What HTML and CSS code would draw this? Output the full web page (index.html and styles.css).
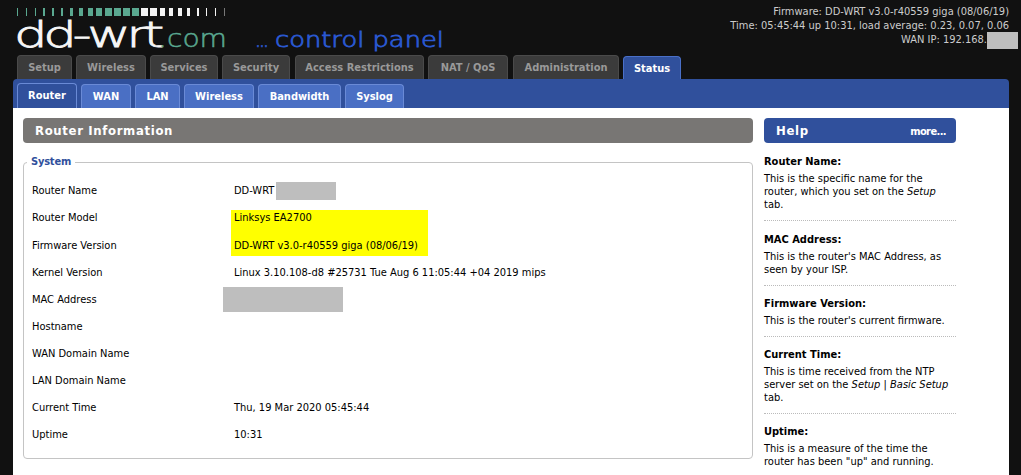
FILE: index.html
```html
<!DOCTYPE html>
<html lang="en">
<head>
<meta charset="utf-8">
<title>DD-WRT Control Panel</title>
<link rel="stylesheet" href="styles.css">
</head>
<body>
<header class="header">
  <div class="brand">
    <svg class="logo" width="450" height="55" viewBox="0 0 450 55" aria-label="dd-wrt.com ... control panel">
      <g fill="#5aa890">
        <rect x="17" y="8" width="1" height="8"/><rect x="26" y="8" width="1" height="8"/><rect x="35" y="8" width="1" height="8"/><rect x="43" y="8" width="2" height="8"/><rect x="52" y="8" width="2" height="8"/><rect x="61" y="8" width="2" height="8"/><rect x="70" y="8" width="3" height="8"/><rect x="79" y="8" width="4" height="8"/><rect x="88" y="8" width="5" height="8"/><rect x="96" y="8" width="6" height="8"/><rect x="105" y="8" width="7" height="8"/><rect x="114" y="8" width="7" height="8"/><rect x="123" y="8" width="7" height="8"/><rect x="132" y="8" width="7" height="8"/>
      </g>
      <g fill="#f4f4f4">
        <rect x="141" y="8" width="7" height="8"/><rect x="150" y="8" width="7" height="8"/><rect x="160" y="8" width="5" height="8"/><rect x="169" y="8" width="4" height="8"/><rect x="178" y="8" width="4" height="8"/><rect x="187" y="8" width="3" height="8"/><rect x="197" y="8" width="2" height="8"/><rect x="206" y="8" width="1" height="8"/><rect x="215" y="8" width="1" height="8"/>
      </g>
      <rect x="224" y="8" width="1" height="8" fill="#777"/>
      <text class="logo-main" x="14" y="47" textLength="146" lengthAdjust="spacingAndGlyphs">dd-wrt</text>
      <text class="logo-com" x="158" y="47" textLength="69" lengthAdjust="spacingAndGlyphs">.com</text>
      <text class="logo-dots" x="256" y="47" textLength="12" lengthAdjust="spacingAndGlyphs">...</text>
      <text class="logo-panel" x="275" y="47" textLength="169" lengthAdjust="spacingAndGlyphs">control panel</text>
    </svg>
  </div>
  <div class="status-info">
    <div>Firmware: DD-WRT v3.0-r40559 giga (08/06/19)</div>
    <div>Time: 05:45:44 up 10:31, load average: 0.23, 0.07, 0.06</div>
    <div class="wan-line">WAN IP: 192.168.<span class="redact redact-ip"></span></div>
  </div>
</header>

<nav class="main-tabs">
  <a class="tab t-setup">Setup</a>
  <a class="tab t-wireless">Wireless</a>
  <a class="tab t-services">Services</a>
  <a class="tab t-security">Security</a>
  <a class="tab t-access">Access Restrictions</a>
  <a class="tab t-nat">NAT / QoS</a>
  <a class="tab t-admin">Administration</a>
  <a class="tab tab-current t-status">Status</a>
</nav>

<div class="panel">
  <nav class="sub-tabs">
    <a class="sub sub-current s-router">Router</a>
    <a class="sub s-wan">WAN</a>
    <a class="sub s-lan">LAN</a>
    <a class="sub s-wireless">Wireless</a>
    <a class="sub s-band">Bandwidth</a>
    <a class="sub s-syslog">Syslog</a>
  </nav>
  <div class="content">
    <main class="main">
      <h2 class="bar bar-grey">Router Information</h2>
      <section class="fieldset">
        <h3 class="legend">System</h3>
        <div class="highlight"></div>
        <div class="row"><span class="label">Router Name</span><span class="value">DD-WRT</span><span class="redact redact-name"></span></div>
        <div class="row"><span class="label">Router Model</span><span class="value">Linksys EA2700</span></div>
        <div class="row row-fw"><span class="label">Firmware Version</span><span class="value">DD-WRT v3.0-r40559 giga (08/06/19)</span></div>
        <div class="row"><span class="label">Kernel Version</span><span class="value">Linux 3.10.108-d8 #25731 Tue Aug 6 11:05:44 +04 2019 mips</span></div>
        <div class="row"><span class="label">MAC Address</span><span class="redact redact-mac"></span></div>
        <div class="row"><span class="label">Hostname</span></div>
        <div class="row"><span class="label">WAN Domain Name</span></div>
        <div class="row"><span class="label">LAN Domain Name</span></div>
        <div class="row"><span class="label">Current Time</span><span class="value">Thu, 19 Mar 2020 05:45:44</span></div>
        <div class="row"><span class="label">Uptime</span><span class="value">10:31</span></div>
      </section>
    </main>
    <aside class="help">
      <div class="bar bar-blue"><span>Help</span><a class="more">more...</a></div>
      <dl class="help-list">
        <dt>Router Name:</dt>
        <dd class="first">This is the specific name for the router, which you set on the <em>Setup</em> tab.</dd>
        <dt>MAC Address:</dt>
        <dd>This is the router's MAC Address, as seen by your ISP.</dd>
        <dt>Firmware Version:</dt>
        <dd>This is the router's current firmware.</dd>
        <dt>Current Time:</dt>
        <dd>This is time received from the NTP server set on the <em>Setup | Basic Setup</em> tab.</dd>
        <dt>Uptime:</dt>
        <dd class="last">This is a measure of the time the router has been "up" and running.</dd>
      </dl>
    </aside>
  </div>
</div>
</body>
</html>
```
FILE: styles.css
```css
* { box-sizing: border-box; }
html, body { height: 100%; }
body {
  margin: 0;
  height: 475px;
  overflow: hidden;
  background: #111;
  font-family: "DejaVu Sans Condensed", "DejaVu Sans", sans-serif;
  font-size: 11px;
  color: #000;
}
.header { height: 55px; display: flex; justify-content: space-between; position: relative; }
.logo { display: block; }
.logo-main { font-family: "DejaVu Sans", sans-serif; font-weight: 200; font-size: 36px; letter-spacing: -3px; fill: #f6f6f6; stroke: #f6f6f6; stroke-width: 0.8px; }
.logo-com { font-family: "DejaVu Sans", sans-serif; font-weight: 200; font-size: 24px; fill: #5aa890; stroke: #5aa890; stroke-width: 0.5px; }
.logo-dots { font-family: "DejaVu Sans", sans-serif; font-weight: 400; font-size: 14px; fill: #2a58d0; stroke: #2a58d0; stroke-width: 0.4px; }
.logo-panel { font-family: "DejaVu Sans", sans-serif; font-weight: 200; font-size: 21px; fill: #2a58d0; stroke: #2a58d0; stroke-width: 0.8px; }
.status-info {
  padding: 5px 12px 0 0;
  text-align: right;
  color: #ccc;
  line-height: 14px;
}
.wan-line { padding-right: 22px; }
.redact { background: #bebebe; display: block; position: absolute; }
.redact-ip { width: 31px; height: 17px; left: 987px; top: 32px; }

.main-tabs { display: flex; height: 24px; padding-left: 17px; gap: 4px; }
.tab {
  display: flex; align-items: center; justify-content: center;
  background: #3b3b3b;
  color: #999;
  font-weight: 700;
  border: 1px solid #4a4a4a;
  border-bottom: 0;
  border-radius: 4px 4px 0 0;
}
.tab-current { background: #30509c; color: #fff; border-color: #4a70c8; margin-top: 1px; }
.t-setup { width: 55px; }
.t-wireless { width: 70px; }
.t-services { width: 68px; }
.t-security { width: 68px; }
.t-access { width: 129px; margin-left: 1px; }
.t-nat { width: 80px; }
.t-admin { width: 106px; margin-left: 1px; }
.t-status { width: 58px; margin-left: 0; }

.panel { margin: 0 12px 0 13px; height: 396px; display: flex; flex-direction: column; }
.sub-tabs {
  height: 29px; flex: none;
  background: #30509c;
  border-radius: 4px 4px 0 0;
  display: flex; gap: 4px; align-items: flex-end;
  padding-left: 4px;
}
.sub {
  height: 24px;
  display: flex; align-items: center; justify-content: center;
  background: #4a6fc4;
  border: 1px solid #6a8ad6;
  border-bottom: 0;
  border-radius: 4px 4px 0 0;
  color: #fff;
  font-weight: 700;
}
.sub-current { background: #30509c; height: 25px; padding-bottom: 2px; }
.s-router { width: 60px; }
.s-wan { width: 50px; }
.s-lan { width: 45px; }
.s-wireless { width: 70px; }
.s-band { width: 83px; }
.s-syslog { width: 59px; }

.content { flex: 1; background: #fff; display: flex; padding: 10px 53px 0 10px; gap: 11px; overflow: hidden; }
.main { width: 730px; flex: none; }
.bar {
  height: 25px; margin: 0; border-radius: 4px;
  color: #fff; font-weight: 700; font-size: 13px; line-height: 25px;
  padding-left: 12px; letter-spacing: 0.65px;
}
.bar-grey { background: #787674; }
.bar-blue { background: #30509c; display: flex; justify-content: space-between; }
.more { font-size: 11px; letter-spacing: -0.6px; padding-right: 10px; line-height: 27px; }
.fieldset {
  position: relative;
  margin-top: 19px;
  height: 297px;
  border: 1px solid #c4c4c4;
  border-radius: 4px;
  padding: 14px 0 0 8px;
}
.legend {
  position: absolute; top: -8px; left: 3px;
  margin: 0; padding: 0 4px;
  background: #fff;
  color: #30509c;
  font-size: 11px; font-weight: 700; line-height: 14px;
  letter-spacing: -0.2px;
}
.highlight { position: absolute; left: 207px; top: 47px; width: 197px; height: 46px; background: #ff0; }
.row { display: flex; height: 27px; align-items: center; position: relative; }
.row-fw { margin-top: 1px; }
.label { width: 202px; flex: none; }
.redact-name { left: 244px; top: 5px; width: 60px; height: 18px; }
.redact-mac { left: 191px; top: 1px; width: 120px; height: 25px; }

.help { width: 192px; flex: none; }
.help-list { margin: 11px 0 0; line-height: 13px; }
.help-list dt { font-weight: 700; line-height: 16px; margin-bottom: 2px; }
.help-list dd { margin: 0 0 10px; padding-bottom: 9px; border-bottom: 1px dotted #bbb; }
.help-list dd.first { margin-bottom: 11px; }
.help-list dd.last { border-bottom: 0; }
```
